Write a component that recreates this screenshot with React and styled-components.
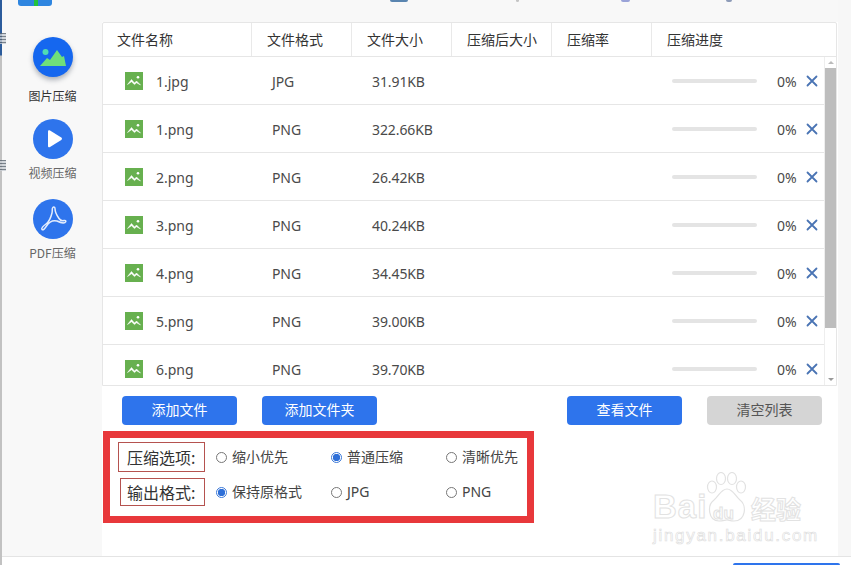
import React from "react";
import styled, { createGlobalStyle } from "styled-components";

const Global = createGlobalStyle`
  html, body { margin: 0; padding: 0; background: #fff; overflow: hidden; }
  body { font-family: "Noto Sans", "Noto Sans CJK SC", sans-serif; }
`;

const Shell = styled.div`
  position: relative;
  display: grid;
  grid-template-columns: 2px 100px 736px 13px;
  grid-template-rows: 556px 9px;
  width: 851px;
  height: 565px;
  overflow: hidden;
  background: #fff;
`;
const EdgeStripe = styled.div`
  grid-row: 1 / -1;
  background: linear-gradient(#2c5c9c 0, #2c5c9c 55px, #c2c2c2 56px, #c2c2c2 100%);
`;
const BehindMark = styled.span`
  position: absolute;
  left: 0;
  top: ${(p) => p.$top}px;
  width: 6px;
  height: 11px;
  background: repeating-linear-gradient(#5a6570 0 1px, #c9ced4 1px 3px);
  opacity: 0.8;
`;
const Sidebar = styled.aside`
  display: flex;
  flex-direction: column;
  padding-left: 1px;
  background: #f8f8f8;
`;
const Logo = styled.div`
  width: 34px;
  height: 6px;
  margin: 0 0 31px 15px;
  border-radius: 0 0 3px 3px;
  background: linear-gradient(90deg, #2f86e0 0 46%, #22c33c 46% 60%, #2f86e0 60% 100%);
`;
const NavItem = styled.div`
  display: flex;
  flex-direction: column;
  align-items: center;
  margin-bottom: ${(p) => (p.$active ? "13px" : "16px")};
`;
const NavIcon = styled.div`
  width: 40px;
  height: 40px;
  margin-bottom: ${(p) => (p.$active ? "9px" : "4px")};
  border-radius: 50%;
  display: flex;
  align-items: center;
  justify-content: center;
  background: ${(p) => (p.$active ? "#1567ef" : "#2e74ec")};
  box-shadow: ${(p) => (p.$active ? "0 3px 5px rgba(60,70,90,.4)" : "none")};
`;
const NavLabel = styled.div`
  font: 12px/20px "Noto Sans CJK SC", sans-serif;
  color: ${(p) => (p.$active ? "#333" : "#666")};
`;

const Main = styled.main`
  display: flex;
  flex-direction: column;
  background: #fff;
`;
const TopBar = styled.div`
  display: flex;
  height: 22px;
  background: #f8f8f8;
`;
const TopMark = styled.span`
  width: ${(p) => p.$w}px;
  height: 2px;
  margin-left: ${(p) => p.$ml}px;
  border-radius: 0 0 3px 3px;
  background: ${(p) => p.$c};
`;
const Gutter = styled.div`
  background: #f7f7f7;
`;
const Card = styled.section`
  height: 364px;
  box-sizing: border-box;
  margin-right: 1px;
  border: 1px solid #e6e6e6;
  border-radius: 2px 2px 0 0;
  display: flex;
  flex-direction: column;
  background: #fff;
`;
const HeadRow = styled.div`
  display: grid;
  grid-template-columns: 149px 100px 100px 100px 100px 1fr;
  height: 33px;
  flex: none;
  border-bottom: 1px solid #e6e6e6;
`;
const HeadCell = styled.div`
  font: 14px/33px "Noto Sans CJK SC", sans-serif;
  color: #333;
  padding-left: ${(p) => (p.$first ? "14px" : "15px")};
  border-right: ${(p) => (p.$last ? "0" : "1px solid #e9e9e9")};
`;
const Body = styled.div`
  display: flex;
  flex: 1;
  min-height: 0;
`;
const Rows = styled.div`
  flex: 1;
  min-width: 0;
  overflow: hidden;
`;
const FileRow = styled.div`
  display: grid;
  grid-template-columns: 149px 100px 100px 100px 100px 1fr;
  align-items: center;
  height: 47px;
  border-bottom: 1px solid #e6e6e6;
  font-size: 14px;
  color: #4a4a4a;
`;
const NameCell = styled.div`
  display: flex;
  align-items: center;
  gap: 13px;
  padding-left: 22px;
`;
const FileName = styled.span`
  padding-top: 2px;
`;
const TextCell = styled.div`
  padding: 2px 0 0 20px;
  letter-spacing: -0.1px;
`;
const ProgressCell = styled.div`
  grid-column: 6;
  display: flex;
  align-items: center;
  padding-left: 20px;
`;
const Track = styled.div`
  width: 85px;
  height: 4px;
  border-radius: 2px;
  background: #e4e4e4;
`;
const Percent = styled.span`
  margin-left: 20px;
  padding-top: 2px;
  width: 29px;
  font-size: 14px;
  color: #4a4a4a;
`;
const Scrollbar = styled.div`
  flex: none;
  width: 12px;
  display: flex;
  flex-direction: column;
  align-items: stretch;
  background: #fff;
  border-left: 1px solid #eee;
  box-sizing: border-box;
`;
const ScrollArrow = styled.div`
  height: 11px;
  flex: none;
  display: flex;
  align-items: center;
  justify-content: center;
  &::before {
    content: "";
    border-left: 3px solid transparent;
    border-right: 3px solid transparent;
    ${(p) => (p.$down ? "border-top: 3px solid #999;" : "border-bottom: 3px solid #bbb;")}
  }
`;
const ScrollThumb = styled.div`
  height: 260px;
  flex: none;
  background: #bdbdbd;
`;
const ScrollTrack = styled.div`
  flex: 1;
`;
const Actions = styled.div`
  display: flex;
  gap: 25px;
  padding: 10px 16px 6px 20px;
`;
const ActionGroup = styled.div`
  display: flex;
  gap: 25px;
  margin-left: ${(p) => (p.$right ? "auto" : "0")};
`;
const Button = styled.button`
  width: 115px;
  height: 29px;
  padding: 0 0 2px;
  border: 0;
  border-radius: 4px;
  font: 14px/27px "Noto Sans CJK SC", sans-serif;
  color: ${(p) => (p.$muted ? "#555" : "#fff")};
  background: ${(p) => (p.$muted ? "#d5d5d5" : "#2e74ec")};
`;
const OptionsFrame = styled.div`
  box-sizing: border-box;
  width: 431px;
  height: 92px;
  margin-left: 1px;
  padding: 4px 0 0 8px;
  border: 7px solid #e8383b;
  display: flex;
  flex-direction: column;
  gap: 6px;
`;
const OptionRow = styled.div`
  display: flex;
  align-items: center;
`;
const OptionLabel = styled.div`
  box-sizing: border-box;
  flex: none;
  width: ${(p) => 87 - p.$indent}px;
  height: ${(p) => p.$h}px;
  margin-left: ${(p) => p.$indent}px;
  padding-left: ${(p) => 8 - p.$indent}px;
  border: 1px solid #b5524f;
  font: 16px/${(p) => p.$h - 2}px "Noto Sans CJK SC", sans-serif;
  color: #333;
  white-space: nowrap;
`;
const Choices = styled.div`
  display: grid;
  flex: none;
  grid-template-columns: 115px 115px auto;
  margin-left: 11px;
`;
const Choice = styled.label`
  display: flex;
  align-items: center;
  gap: 5px;
  font: 14px/20px "Noto Sans", "Noto Sans CJK SC", sans-serif;
  color: #444;
`;
const Radio = styled.span`
  box-sizing: border-box;
  width: 11px;
  height: 11px;
  border-radius: 50%;
  border: 1px solid ${(p) => (p.$on ? "#3a78d8" : "#777")};
  background: ${(p) => (p.$on ? "radial-gradient(circle, #2e6fd8 0 3.4px, #fff 4px)" : "#fff")};
`;
const Footer = styled.footer`
  grid-column: 2 / -1;
  box-sizing: border-box;
  border-top: 1px solid #e4e4e4;
  padding: 6px 11px 0 0;
  display: flex;
  justify-content: flex-end;
  background: #fff;
`;
const FooterButton = styled.div`
  width: 107px;
  height: 2px;
  border-radius: 3px 3px 0 0;
  background: #2e74ec;
`;
const Watermark = styled.div`
  position: absolute;
  left: 653px;
  top: 470px;
  width: 155px;
  height: 76px;
  color: transparent;
  -webkit-text-stroke: 1px #e2e2e2;
  pointer-events: none;
`;
const WmBai = styled.span`
  position: absolute;
  left: 0;
  top: 17px;
  font: 700 33px/40px "Liberation Sans", sans-serif;
  letter-spacing: 1px;
`;
const WmDu = styled.span`
  position: absolute;
  left: 60px;
  top: 33px;
  font: 700 17px/22px "Liberation Sans", sans-serif;
`;
const WmJy = styled.span`
  position: absolute;
  left: 98px;
  top: 24px;
  font: 700 25px/28px "Noto Sans CJK SC", sans-serif;
`;
const WmUrl = styled.span`
  position: absolute;
  left: 0;
  top: 56px;
  font: 400 17px/20px "Liberation Sans", sans-serif;
  letter-spacing: 1.7px;
  white-space: nowrap;
  -webkit-text-stroke: 0.6px #dcdcdc;
`;
const PawSvg = styled.svg`
  position: absolute;
  left: 52px;
  top: 2px;
`;

const MountainIcon = () => (
  <svg width="28" height="24" viewBox="0 0 28 24">
    <circle cx="6.5" cy="7" r="3" fill="#4fdcb4" />
    <path d="M1 21 L8 13 L11 15 L18 5 L23 12 L25 11 L27 21 Z" fill="#6fe07a" />
  </svg>
);
const PlayIcon = () => (
  <svg width="24" height="24" viewBox="0 0 24 24">
    <path d="M7 4.5 C7 3.2 8 2.8 9 3.4 L20.3 10.5 C21.2 11.1 21.2 12.3 20.3 12.9 L9 20 C8 20.6 7 20.2 7 19 Z" fill="#fff" />
  </svg>
);
const PdfIcon = () => (
  <svg width="32" height="32" viewBox="0 0 32 32" fill="none" stroke="#e4edfd" strokeWidth="1.5" strokeLinejoin="round" strokeLinecap="round">
    <path d="M15.5 5 C16 3.5 18 3.5 18 5.5 C18 8 19.5 12 22 15.5 C23 17 25 18 27 17.5 C29 17 29.5 18.5 28 19.5 C26 20.5 23 19.5 20 18 C16 17 12 19 9.5 23 C8 25.5 6 27.5 5 26.5 C4 25.5 6 23 9 21 C12 19 14 14 15 10 C15.5 8 15 6 15.5 5 Z" />
  </svg>
);
const FileIcon = () => (
  <svg width="18" height="18" viewBox="0 0 18 18">
    <rect width="18" height="18" fill="#67b04f" />
    <circle cx="13" cy="5.2" r="1.3" fill="#fff" />
    <path d="M2.5 12.5 L6.5 7.5 L9.5 11 L11.5 9 L15.5 13 L11.5 10.8 L9.5 12.6 L6.5 9.8 Z" fill="#fff" stroke="#fff" strokeWidth=".5" />
  </svg>
);
const CloseIcon = () => (
  <svg width="12" height="12" viewBox="0 0 12 12" stroke="#4a74b4" strokeWidth="1.8" strokeLinecap="round">
    <path d="M1.5 1.5 L10.5 10.5 M10.5 1.5 L1.5 10.5" />
  </svg>
);
const Paw = () => (
  <PawSvg width="44" height="52" viewBox="0 0 44 52" fill="none" stroke="#e2e2e2" strokeWidth="1.2">
    <ellipse cx="7" cy="15" rx="4.5" ry="6" />
    <ellipse cx="16" cy="6.5" rx="4.5" ry="6" />
    <ellipse cx="27" cy="6.5" rx="4.5" ry="6" />
    <ellipse cx="36" cy="15" rx="4.5" ry="6" />
    <path d="M22 17 C28 17 30 24 35 28 C42 33 41 49 29 49 C25 49 24 48 22 48 C20 48 18 49 14 49 C3 49 2 33 9 28 C14 24 16 17 22 17 Z" />
  </PawSvg>
);

const columns = ["文件名称", "文件格式", "文件大小", "压缩后大小", "压缩率", "压缩进度"];
const files = [
  ["1.jpg", "JPG", "31.91KB"],
  ["1.png", "PNG", "322.66KB"],
  ["2.png", "PNG", "26.42KB"],
  ["3.png", "PNG", "40.24KB"],
  ["4.png", "PNG", "34.45KB"],
  ["5.png", "PNG", "39.00KB"],
  ["6.png", "PNG", "39.70KB"],
];

export default function App() {
  return (
    <Shell>
      <Global />
      <EdgeStripe />
      <BehindMark $top={33} />
      <BehindMark $top={160} />
      <Sidebar>
        <Logo />
        <NavItem $active>
          <NavIcon $active><MountainIcon /></NavIcon>
          <NavLabel $active>图片压缩</NavLabel>
        </NavItem>
        <NavItem>
          <NavIcon><PlayIcon /></NavIcon>
          <NavLabel>视频压缩</NavLabel>
        </NavItem>
        <NavItem>
          <NavIcon><PdfIcon /></NavIcon>
          <NavLabel>PDF压缩</NavLabel>
        </NavItem>
      </Sidebar>
      <Main>
        <TopBar>
          <TopMark $ml={288} $w={18} $c="#5a85b0" />
          <TopMark $ml={108} $w={3} $c="#c4c4c4" />
          <TopMark $ml={102} $w={9} $c="#9aa3d8" />
          <TopMark $ml={96} $w={6} $c="#8d9bb8" />
        </TopBar>
        <Card>
          <HeadRow>
            {columns.map((c, i) => (
              <HeadCell key={c} $first={i === 0} $last={i === columns.length - 1}>{c}</HeadCell>
            ))}
          </HeadRow>
          <Body>
            <Rows>
              {files.map(([name, format, size]) => (
                <FileRow key={name}>
                  <NameCell><FileIcon /><FileName>{name}</FileName></NameCell>
                  <TextCell>{format}</TextCell>
                  <TextCell>{size}</TextCell>
                  <ProgressCell>
                    <Track />
                    <Percent>0%</Percent>
                    <CloseIcon />
                  </ProgressCell>
                </FileRow>
              ))}
            </Rows>
            <Scrollbar>
              <ScrollArrow />
              <ScrollThumb />
              <ScrollTrack />
              <ScrollArrow $down />
            </Scrollbar>
          </Body>
        </Card>
        <Actions>
          <ActionGroup>
            <Button>添加文件</Button>
            <Button>添加文件夹</Button>
          </ActionGroup>
          <ActionGroup $right>
            <Button>查看文件</Button>
            <Button $muted>清空列表</Button>
          </ActionGroup>
        </Actions>
        <OptionsFrame>
          <OptionRow>
            <OptionLabel $h={30} $indent={0}>压缩选项:</OptionLabel>
            <Choices>
              <Choice><Radio />缩小优先</Choice>
              <Choice><Radio $on />普通压缩</Choice>
              <Choice><Radio />清晰优先</Choice>
            </Choices>
          </OptionRow>
          <OptionRow>
            <OptionLabel $h={28} $indent={2}>输出格式:</OptionLabel>
            <Choices>
              <Choice><Radio $on />保持原格式</Choice>
              <Choice><Radio />JPG</Choice>
              <Choice><Radio />PNG</Choice>
            </Choices>
          </OptionRow>
        </OptionsFrame>
      </Main>
      <Gutter />
      <Footer><FooterButton /></Footer>
      <Watermark>
        <WmBai>Bai</WmBai>
        <Paw />
        <WmDu>du</WmDu>
        <WmJy>经验</WmJy>
        <WmUrl>jingyan.baidu.com</WmUrl>
      </Watermark>
    </Shell>
  );
}
